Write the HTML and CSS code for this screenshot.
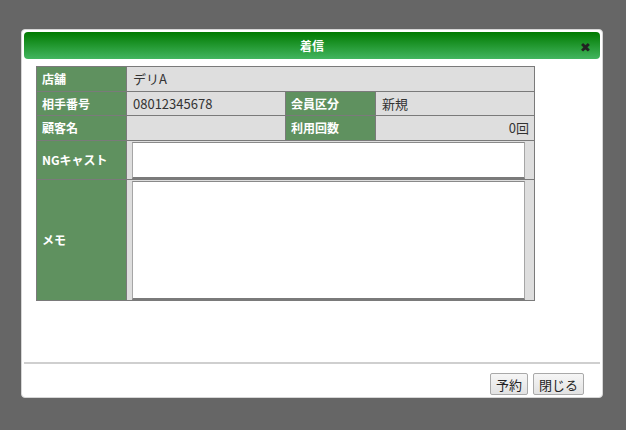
FILE: index.html
```html
<!DOCTYPE html>
<html lang="ja">
<head>
<meta charset="utf-8">
<title>着信</title>
<link rel="stylesheet" href="styles.css">
</head>
<body>
<div class="dialog">
  <div class="titlebar">
    <span></span>
    <span class="title">着信</span>
    <span class="close">&#x2716;</span>
  </div>
  <div class="content">
    <table class="info">
      <colgroup>
        <col class="c1"><col class="c2"><col class="c3"><col class="c4">
      </colgroup>
      <tr class="r1">
        <th>店舗</th>
        <td colspan="3">デリA</td>
      </tr>
      <tr class="r2">
        <th>相手番号</th>
        <td>08012345678</td>
        <th>会員区分</th>
        <td>新規</td>
      </tr>
      <tr class="r3">
        <th>顧客名</th>
        <td></td>
        <th>利用回数</th>
        <td class="num">0回</td>
      </tr>
      <tr class="r4">
        <th>NGキャスト</th>
        <td colspan="3" class="area"><textarea class="ng"></textarea></td>
      </tr>
      <tr class="r5">
        <th>メモ</th>
        <td colspan="3" class="area"><textarea class="memo"></textarea></td>
      </tr>
    </table>
  </div>
  <div class="buttonpane">
    <button class="btn">予約</button>
    <button class="btn">閉じる</button>
  </div>
</div>
</body>
</html>
```

FILE: styles.css
```css
html, body {
  margin: 0;
  padding: 0;
}
body {
  background: #666666;
  width: 626px;
  height: 430px;
  padding: 29px 0 0 21px;
  box-sizing: border-box;
  font-family: "Noto Sans CJK JP", "Noto Sans", sans-serif;
}
.dialog {
  width: 582px;
  height: 369px;
  box-sizing: border-box;
  background: #ffffff;
  border: 1px solid #d6d6d6;
  border-radius: 4px;
  padding: 2px;
  display: flex;
  flex-direction: column;
}
.titlebar {
  height: 27px;
  border-radius: 4px;
  background: linear-gradient(#007a00, #43b55f);
  display: grid;
  grid-template-columns: 1fr auto 1fr;
  align-items: center;
  color: #ffffff;
}
.title {
  font-size: 12px;
  font-weight: bold;
  line-height: 1;
  padding-top: 1px;
}
.close {
  justify-self: end;
  margin-right: 9px;
  color: #222;
  font-size: 13px;
  line-height: 1;
  padding-top: 2px;
}
.content {
  height: 306px;
  box-sizing: border-box;
  padding: 7px 0 0 12px;
  border-bottom: 2px solid #cfcfcf;
}
.info {
  width: 498px;
  border-collapse: collapse;
  table-layout: fixed;
}
.c1 { width: 90px; }
.c2 { width: 159px; }
.c3 { width: 90px; }
.c4 { width: 159px; }
.info th, .info td {
  border: 1px solid #7a7a7a;
  padding: 0 6px;
  font-size: 13px;
}
.info th {
  background: #5f915f;
  color: #ffffff;
  font-weight: bold;
  font-size: 12px;
  text-align: left;
  padding-left: 5px;
}
.info td {
  background: #dedede;
  color: #333333;
}
.info td.num {
  text-align: right;
  padding-right: 5px;
}
.r1 { height: 25px; }
.r2 { height: 24px; }
.r3 { height: 25px; }
.r4 { height: 39px; }
.r5 { height: 120px; }
.info td.area {
  padding: 1px 9px 0 5px;
  vertical-align: top;
  line-height: 0;
}
textarea {
  display: block;
  width: 100%;
  box-sizing: border-box;
  margin: 0;
  resize: none;
  background: #ffffff;
  border: 1px solid #a6a6a6;
  border-top-color: #8a8a8a;
  border-bottom: 2px solid #7a7a7a;
  font-family: inherit;
}
textarea.ng { height: 37px; }
textarea.memo { height: 119px; }
.buttonpane {
  display: flex;
  justify-content: flex-end;
  gap: 5px;
  padding: 9px 16px 0 0;
}
.btn {
  height: 22px;
  margin: 0;
  padding: 0 5px;
  font-family: "Noto Sans CJK JP", sans-serif;
  font-size: 13px;
  color: #222;
  background: linear-gradient(#f6f6f6, #e2e2e2);
  border: 1px solid #a9a9a9;
  border-radius: 2px;
  line-height: 1;
}
```
